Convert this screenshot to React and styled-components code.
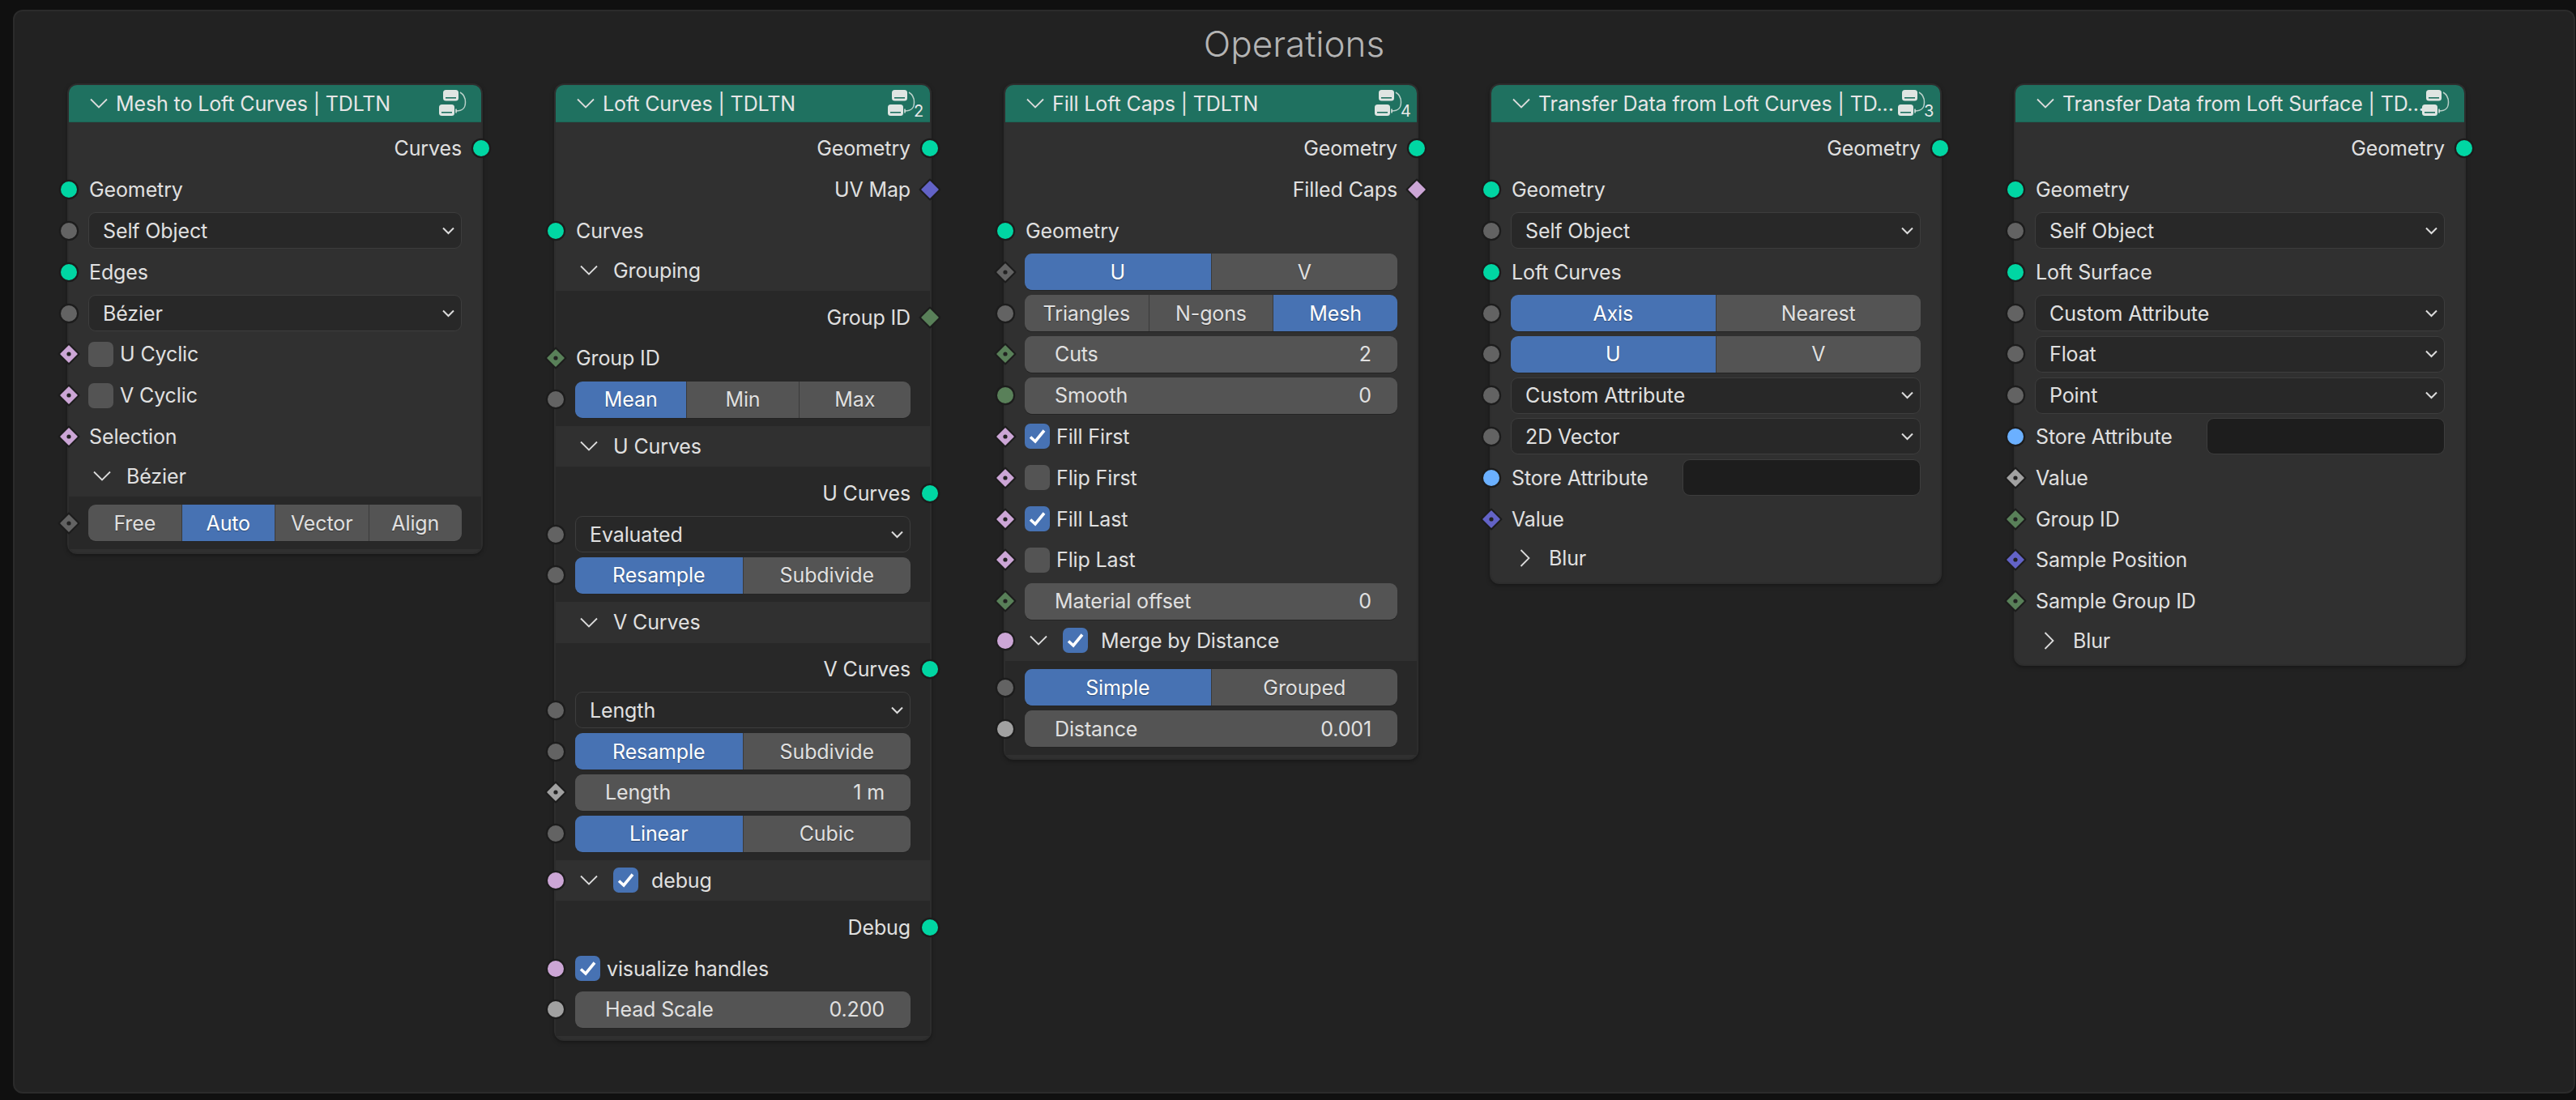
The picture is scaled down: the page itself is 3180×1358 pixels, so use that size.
import React from 'react';
import styled, { createGlobalStyle } from 'styled-components';

const Global = createGlobalStyle`
  html, body { margin: 0; padding: 0; background: #101010; }
  body { width: 3180px; height: 1358px; overflow: hidden; font-family: Inter, "Noto Sans", sans-serif; }
`;

const Frame = styled.main`
  position: relative;
  box-sizing: border-box;
  width: 3163px;
  height: 1338px;
  margin: 12px 0 0 16px;
  background: #222222;
  border: 2px solid #2b2b2b;
  border-radius: 12px;
`;
const FrameTitle = styled.h1`
  margin: 0;
  padding-top: 16px;
  text-align: center;
  font-size: 44px;
  line-height: 48px;
  font-weight: 300;
  color: #b4b4b4;
`;
const NodeBox = styled.section`
  position: absolute;
  left: ${p => p.$x - 18}px;
  top: 89px;
  width: ${p => p.$w}px;
  box-sizing: border-box;
  padding-bottom: 4px;
  background: #303030;
  border: 2px solid #2d2d2d;
  border-radius: 12px;
  box-shadow: 0 2px 5px rgba(0, 0, 0, 0.35);
  color: #e0e0e0;
  font-size: 25px;
  letter-spacing: -0.12px;
  line-height: 30px;
`;
const Header = styled.header`
  position: relative;
  display: flex;
  align-items: center;
  height: 45px;
  padding-left: 26px;
  background: #1f7160;
  border-radius: 10px 10px 0 0;
  color: #e6e6e6;
  border-bottom: 1px solid #1c6655;
`;
const Title = styled.span`
  margin-left: 10px;
  white-space: nowrap;
`;
const GroupIconWrap = styled.div`
  position: absolute;
  right: 18px;
  top: 6px;
  width: 34px;
  height: 32px;
`;
const UserCount = styled.span`
  position: absolute;
  left: 32px;
  top: 15px;
  font-size: 20px;
  line-height: 22px;
  color: #e8e8e8;
`;
const Rows = styled.div`
  padding-top: 7px;
`;
const Row = styled.div`
  position: relative;
  display: flex;
  align-items: center;
  justify-content: ${p => (p.$out ? 'flex-end' : 'flex-start')};
  height: 50.8px;
  box-sizing: border-box;
  padding: 0 24px;
`;
const SocketWrap = styled.span`
  position: absolute;
  top: 50%;
  ${p => (p.$out ? 'right: -16px;' : 'left: -16px;')}
  width: 32px;
  height: 32px;
  margin-top: -16px;
  line-height: 0;
`;
const Label = styled.span`
  white-space: nowrap;
  padding-left: ${p => (p.$in ? '1px' : '0')};
`;
const Select = styled.div`
  flex: 1;
  display: flex;
  align-items: center;
  justify-content: space-between;
  height: 45px;
  box-sizing: border-box;
  padding: 0 8px 0 17px;
  background: #282828;
  border: 1px solid #3d3d3d;
  border-radius: 9px;
`;
const Enum = styled.div`
  flex: 1;
  display: flex;
  height: 45px;
  border-radius: 9px;
  overflow: hidden;
  box-shadow: 0 1px 0 #242424;
`;
const EnumItem = styled.div`
  flex: 1 1 0;
  display: flex;
  align-items: center;
  justify-content: center;
  background: ${p => (p.$on ? '#4772b3' : '#545454')};
  color: ${p => (p.$on ? '#ffffff' : '#e0e0e0')};
  text-shadow: 0 1px 1px rgba(0, 0, 0, 0.35);
  & + & { border-left: 1px solid #3a3a3a; }
`;
const NumberField = styled.div`
  flex: 1;
  display: flex;
  align-items: center;
  justify-content: space-between;
  height: 45px;
  box-sizing: border-box;
  padding: 0 32px 0 37px;
  background: #545454;
  border-radius: 9px;
  box-shadow: 0 1px 0 #242424;
`;
const CheckBox = styled.span`
  flex: none;
  display: inline-flex;
  width: 31px;
  height: 31px;
  margin-right: ${p => p.$gap}px;
  background: ${p => (p.$on ? '#4772b3' : '#545454')};
  border-radius: 7px;
`;
const TextField = styled.div`
  width: 294px;
  height: 45px;
  margin-left: auto;
  box-sizing: border-box;
  background: #1d1d1d;
  border: 1px solid #3d3d3d;
  border-radius: 9px;
`;
const PanelHeader = styled.div`
  position: relative;
  display: flex;
  align-items: center;
  height: 50.8px;
  margin-top: ${p => (p.$flush ? '0' : '-2px')};
  padding-left: 30px;
`;
const ChevronBox = styled.span`
  display: inline-flex;
  justify-content: center;
  width: 22px;
  margin-right: 19px;
  line-height: 0;
`;
const PanelBody = styled.div`
  padding: 7px 0;
  background: #282828;
`;

const C = {
  geo: { color: '#00d6a3' },
  val: { color: '#636363' },
  flt: { color: '#a1a1a1' },
  bool: { color: '#cca6d6' },
  int: { color: '#598059' },
  vec: { color: '#6363c7' },
  blue: { color: '#6bb0ff' },
  dval: { color: '#636363', diamond: true, dot: true },
  dflt: { color: '#a1a1a1', diamond: true, dot: true },
  dbool: { color: '#cca6d6', diamond: true, dot: true },
  dint: { color: '#598059', diamond: true, dot: true },
  dvec: { color: '#6363c7', diamond: true, dot: true },
  obool: { color: '#cca6d6', diamond: true },
  oint: { color: '#598059', diamond: true },
  ovec: { color: '#6363c7', diamond: true },
};

function Socket({ type, out }) {
  return (
    <SocketWrap $out={out}>
      <svg width="32" height="32" viewBox="0 0 32 32">
        {type.diamond ? (
          <>
            <path d="M16 3.5 28.5 16 16 28.5 3.5 16Z" fill="#1c1c1c" stroke="#1c1c1c" strokeWidth="2" strokeLinejoin="round" />
            <path d="M16 6 26 16 16 26 6 16Z" fill={type.color} stroke={type.color} strokeWidth="1.5" strokeLinejoin="round" />
            {type.dot && <circle cx="16" cy="16" r="2.6" fill="#222" />}
          </>
        ) : (
          <>
            <circle cx="16" cy="16" r="12.2" fill="#1c1c1c" />
            <circle cx="16" cy="16" r="10" fill={type.color} />
          </>
        )}
      </svg>
    </SocketWrap>
  );
}

const ChevronDown = () => (
  <svg width="22" height="13" viewBox="0 0 22 13">
    <path d="M1 1.5 11 11.5 21 1.5" fill="none" stroke="#dcdcdc" strokeWidth="1.8" />
  </svg>
);
const ChevronRight = () => (
  <svg width="13" height="22" viewBox="0 0 13 22">
    <path d="M1.5 1 11.5 11 1.5 21" fill="none" stroke="#dcdcdc" strokeWidth="1.8" />
  </svg>
);
const SelectArrow = () => (
  <svg width="15" height="10" viewBox="0 0 15 10">
    <path d="M1 1.5 7.5 8 14 1.5" fill="none" stroke="#dcdcdc" strokeWidth="2" />
  </svg>
);
const Check = () => (
  <svg width="31" height="31" viewBox="0 0 31 31">
    <path d="M7 16.5 13 22 24 8.5" fill="none" stroke="#ffffff" strokeWidth="3.6" />
  </svg>
);
const GroupIcon = ({ count }) => (
  <GroupIconWrap>
    <svg width="34" height="32" viewBox="0 0 34 32">
      <rect x="5" y="0" width="19" height="13.5" rx="3.5" fill="#dfe5e2" />
      <rect x="0" y="18" width="19" height="14" rx="3.5" fill="#dfe5e2" />
      <rect x="8" y="9" width="13" height="1.6" fill="#1f7160" />
      <rect x="3" y="27" width="13" height="1.6" fill="#1f7160" />
      <path d="M26 3 C31 6 32.5 10 32.5 15 C32.5 22 30 26 21 26" fill="none" stroke="#b9d0c9" strokeWidth="1.5" />
      <path d="M21 23.5V28.5" stroke="#dfe5e2" strokeWidth="1.5" />
    </svg>
    {count && <UserCount>{count}</UserCount>}
  </GroupIconWrap>
);

function NodeRow({ r }) {
  const [kind] = r;
  if (kind === 'out') return <Row $out><Label>{r[1]}</Label><Socket type={r[2]} out /></Row>;
  if (kind === 'in') return <Row><Socket type={r[2]} /><Label $in>{r[1]}</Label></Row>;
  if (kind === 'sel')
    return (
      <Row>
        <Socket type={r[2] || C.val} />
        <Select><span>{r[1]}</span><SelectArrow /></Select>
      </Row>
    );
  if (kind === 'enum')
    return (
      <Row>
        <Socket type={r[3] || C.val} />
        <Enum>{r[1].map((o, i) => <EnumItem key={o} $on={i === r[2]}>{o}</EnumItem>)}</Enum>
      </Row>
    );
  if (kind === 'num')
    return (
      <Row>
        <Socket type={r[3]} />
        <NumberField><span>{r[1]}</span><span>{r[2]}</span></NumberField>
      </Row>
    );
  if (kind === 'chk')
    return (
      <Row>
        <Socket type={r[3] || C.dbool} />
        <CheckBox $on={r[2]} $gap={8}>{r[2] && <Check />}</CheckBox>
        <Label>{r[1]}</Label>
      </Row>
    );
  if (kind === 'store')
    return (
      <Row>
        <Socket type={C.blue} />
        <Label $in>Store Attribute</Label>
        <TextField />
      </Row>
    );
  return null;
}

function Panel({ label, open, check, socket, rows, flush }) {
  return (
    <>
      <PanelHeader $flush={flush}>
        {socket && <Socket type={socket} />}
        <ChevronBox>{open ? <ChevronDown /> : <ChevronRight />}</ChevronBox>
        {check && <CheckBox $on $gap={16}><Check /></CheckBox>}
        <Label>{label}</Label>
      </PanelHeader>
      {open && (
        <PanelBody>
          {rows.map((r, i) => <NodeRow key={i} r={r} />)}
        </PanelBody>
      )}
    </>
  );
}

function Node({ x, w, title, count, rows, panels }) {
  return (
    <NodeBox $x={x} $w={w}>
      <Header>
        <ChevronDown />
        <Title>{title}</Title>
        <GroupIcon count={count} />
      </Header>
      <Rows>
        {rows.map((r, i) => <NodeRow key={i} r={r} />)}
        {panels && panels.map((p, i) => <Panel key={p.label} {...p} flush={i > 0} />)}
      </Rows>
    </NodeBox>
  );
}

const EN2 = (a, b, on, s) => ['enum', [a, b], on, s];

const nodes = [
  {
    x: 83, w: 513, title: 'Mesh to Loft Curves | TDLTN',
    rows: [
      ['out', 'Curves', C.geo],
      ['in', 'Geometry', C.geo],
      ['sel', 'Self Object'],
      ['in', 'Edges', C.geo],
      ['sel', 'Bézier'],
      ['chk', 'U Cyclic', false],
      ['chk', 'V Cyclic', false],
      ['in', 'Selection', C.dbool],
    ],
    panels: [
      { label: 'Bézier', open: true, rows: [['enum', ['Free', 'Auto', 'Vector', 'Align'], 1, C.dval]] },
    ],
  },
  {
    x: 684, w: 466, title: 'Loft Curves | TDLTN', count: '2',
    rows: [
      ['out', 'Geometry', C.geo],
      ['out', 'UV Map', C.ovec],
      ['in', 'Curves', C.geo],
    ],
    panels: [
      {
        label: 'Grouping', open: true,
        rows: [
          ['out', 'Group ID', C.oint],
          ['in', 'Group ID', C.dint],
          ['enum', ['Mean', 'Min', 'Max'], 0],
        ],
      },
      {
        label: 'U Curves', open: true,
        rows: [
          ['out', 'U Curves', C.geo],
          ['sel', 'Evaluated'],
          EN2('Resample', 'Subdivide', 0),
        ],
      },
      {
        label: 'V Curves', open: true,
        rows: [
          ['out', 'V Curves', C.geo],
          ['sel', 'Length'],
          EN2('Resample', 'Subdivide', 0),
          ['num', 'Length', '1 m', C.dflt],
          EN2('Linear', 'Cubic', 0),
        ],
      },
      {
        label: 'debug', open: true, check: true, socket: C.bool,
        rows: [
          ['out', 'Debug', C.geo],
          ['chk', 'visualize handles', true, C.bool],
          ['num', 'Head Scale', '0.200', C.flt],
        ],
      },
    ],
  },
  {
    x: 1239, w: 512, title: 'Fill Loft Caps | TDLTN', count: '4',
    rows: [
      ['out', 'Geometry', C.geo],
      ['out', 'Filled Caps', C.obool],
      ['in', 'Geometry', C.geo],
      EN2('U', 'V', 0, C.dval),
      ['enum', ['Triangles', 'N-gons', 'Mesh'], 2],
      ['num', 'Cuts', '2', C.dint],
      ['num', 'Smooth', '0', C.int],
      ['chk', 'Fill First', true],
      ['chk', 'Flip First', false],
      ['chk', 'Fill Last', true],
      ['chk', 'Flip Last', false],
      ['num', 'Material offset', '0', C.dint],
    ],
    panels: [
      {
        label: 'Merge by Distance', open: true, check: true, socket: C.bool,
        rows: [
          EN2('Simple', 'Grouped', 0),
          ['num', 'Distance', '0.001', C.flt],
        ],
      },
    ],
  },
  {
    x: 1839, w: 558, title: 'Transfer Data from Loft Curves | TD...', count: '3',
    rows: [
      ['out', 'Geometry', C.geo],
      ['in', 'Geometry', C.geo],
      ['sel', 'Self Object'],
      ['in', 'Loft Curves', C.geo],
      EN2('Axis', 'Nearest', 0),
      EN2('U', 'V', 0),
      ['sel', 'Custom Attribute'],
      ['sel', '2D Vector'],
      ['store'],
      ['in', 'Value', C.dvec],
    ],
    panels: [{ label: 'Blur', open: false }],
  },
  {
    x: 2486, w: 558, title: 'Transfer Data from Loft Surface | TD...',
    rows: [
      ['out', 'Geometry', C.geo],
      ['in', 'Geometry', C.geo],
      ['sel', 'Self Object'],
      ['in', 'Loft Surface', C.geo],
      ['sel', 'Custom Attribute'],
      ['sel', 'Float'],
      ['sel', 'Point'],
      ['store'],
      ['in', 'Value', C.dflt],
      ['in', 'Group ID', C.dint],
      ['in', 'Sample Position', C.dvec],
      ['in', 'Sample Group ID', C.dint],
    ],
    panels: [{ label: 'Blur', open: false }],
  },
];

export default function App() {
  return (
    <>
      <Global />
      <Frame>
        <FrameTitle>Operations</FrameTitle>
        {nodes.map(n => <Node key={n.title} {...n} />)}
      </Frame>
    </>
  );
}
